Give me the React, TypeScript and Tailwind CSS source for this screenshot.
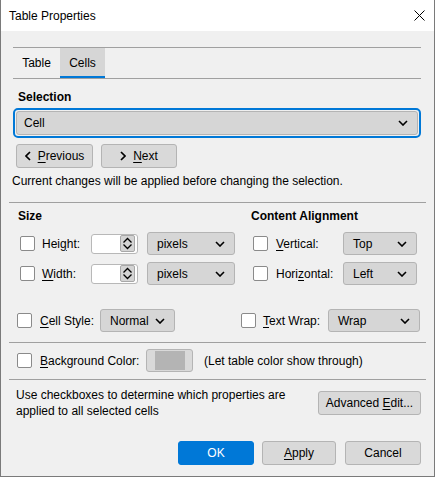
import { ReactNode } from 'react';

function Chevron() {
  return (
    <svg width="10" height="6" viewBox="0 0 10 6" className="shrink-0">
      <path d="M1 1 L5 5 L9 1" fill="none" stroke="#000" strokeWidth="1.6" />
    </svg>
  );
}

function Check({ className = '' }: { className?: string }) {
  return <div className={`w-[15px] h-[15px] shrink-0 bg-white border border-[#8a8a8a] rounded-[2px] ${className}`} />;
}

function Select({ label, w, h = 'h-[23px]' }: { label: string; w: string; h?: string }) {
  return (
    <div className={`${w} ${h} shrink-0 flex items-center justify-between pl-[9px] pr-[9px] bg-[#d6d6d6] border border-[#b4b4b4] rounded-[3px]`}>
      <span>{label}</span>
      <Chevron />
    </div>
  );
}

function Btn({ children, w, primary = false }: { children: ReactNode; w: string; primary?: boolean }) {
  return (
    <div
      className={`${w} h-[24px] shrink-0 flex items-center justify-center rounded-[3px] border ${
        primary ? 'bg-[#0078d7] border-[#0078d7] text-white' : 'bg-[#d9d9d9] border-[#b4b4b4]'
      }`}
    >
      {children}
    </div>
  );
}

function U({ children }: { children: ReactNode }) {
  return <span className="underline underline-offset-2">{children}</span>;
}

function Spin() {
  return (
    <div className="w-[47px] h-[20px] shrink-0 bg-white border border-[#b8b8b8] rounded-[3px] flex items-center justify-end pr-[2px]">
      <div className="w-[15px] h-[17px] bg-[#d4d4d4] border border-[#a8a8a8] rounded-[2px] flex items-center justify-center">
        <svg width="11" height="13" viewBox="0 0 11 13">
          <path d="M1.5 5.5 L5.5 1.5 L9.5 5.5 M1.5 7.5 L5.5 11.5 L9.5 7.5" fill="none" stroke="#000" strokeWidth="1.3" />
        </svg>
      </div>
    </div>
  );
}

function Sep() {
  return <div className="ml-[8px] w-[417px] h-px bg-[#a0a0a0]" />;
}

export default function App() {
  return (
    <div className="w-[436px] h-[477px] bg-white font-['Liberation_Sans',Arial,sans-serif] text-[12px] leading-[16px] text-black">
      <div className="w-[435px] h-[477px] bg-[#f0f0f0] border border-t-0 border-[#7a7a7a] flex flex-col">
        {/* Title bar */}
        <div className="h-[31px] bg-white flex items-center justify-between pl-[8px] pr-[9px] shrink-0">
          <span>Table Properties</span>
          <svg width="11" height="11" viewBox="0 0 11 11">
            <path d="M0.5 0.5 L10.5 10.5 M10.5 0.5 L0.5 10.5" stroke="#000" strokeWidth="1" />
          </svg>
        </div>

        {/* Tabs */}
        <div className="mt-[16px] ml-[12px] w-[408px] border-t border-b border-[#a0a0a0] flex h-[32px]">
          <div className="h-[30px] w-[47px] flex items-center justify-center">Table</div>
          <div className="h-[30px] w-[45px] flex items-center justify-center bg-[#d6d6d6] border-b-2 border-[#0078d7] pt-[2px]">Cells</div>
        </div>

        {/* Selection */}
        <div className="mt-[10px] ml-[17px] font-bold">Selection</div>
        <div className="mt-[3px] ml-[12px] w-[408px] h-[30px] border-2 border-[#0078d7] rounded-[5px] p-px">
          <div className="h-full flex items-center justify-between pl-[7px] pr-[9px] bg-[#d6d6d6] border border-[#b4b4b4] rounded-[3px]">
            <span>Cell</span>
            <Chevron />
          </div>
        </div>
        <div className="mt-[6px] ml-[15px] flex gap-[8px]">
          <Btn w="w-[77px]">
            <svg width="6" height="10" viewBox="0 0 6 10" className="mr-[7px]">
              <path d="M5 1 L1 5 L5 9" fill="none" stroke="#000" strokeWidth="1.7" />
            </svg>
            <U>P</U>revious
          </Btn>
          <Btn w="w-[76px]">
            <svg width="6" height="10" viewBox="0 0 6 10" className="mr-[7px]">
              <path d="M1 1 L5 5 L1 9" fill="none" stroke="#000" strokeWidth="1.7" />
            </svg>
            <U>N</U>ext
          </Btn>
        </div>
        <div className="mt-[5px] ml-[11px]">Current changes will be applied before changing the selection.</div>
        <div className="mt-[13px]">
          <Sep />
        </div>

        {/* Size / Content Alignment */}
        <div className="mt-[5px] flex">
          <div className="ml-[17px] w-[233px] font-bold">Size</div>
          <div className="font-bold">Content Alignment</div>
        </div>
        <div className="mt-[8px] flex items-center h-[23px]">
          <Check className="ml-[19px]" />
          <div className="ml-[7px] w-[49px]">
            Hei<U>g</U>ht:
          </div>
          <Spin />
          <div className="ml-[9px]">
            <Select label="pixels" w="w-[88px]" />
          </div>
          <Check className="ml-[18px]" />
          <div className="ml-[8px] w-[67px]">
            <U>V</U>ertical:
          </div>
          <Select label="Top" w="w-[74px]" />
        </div>
        <div className="mt-[7px] flex items-center h-[23px]">
          <Check className="ml-[19px]" />
          <div className="ml-[7px] w-[49px]">
            <U>W</U>idth:
          </div>
          <Spin />
          <div className="ml-[9px]">
            <Select label="pixels" w="w-[88px]" />
          </div>
          <Check className="ml-[18px]" />
          <div className="ml-[8px] w-[67px]">
            Hori<U>z</U>ontal:
          </div>
          <Select label="Left" w="w-[74px]" />
        </div>

        {/* Cell style / wrap */}
        <div className="mt-[24px] flex items-center h-[23px]">
          <Check className="ml-[16px]" />
          <div className="ml-[8px] w-[60px]">
            <U>C</U>ell Style:
          </div>
          <Select label="Normal" w="w-[75px]" />
          <Check className="ml-[66px]" />
          <div className="ml-[7px] w-[65px]">
            <U>T</U>ext Wrap:
          </div>
          <Select label="Wrap" w="w-[92px]" />
        </div>
        <div className="mt-[10px]">
          <Sep />
        </div>

        {/* Background */}
        <div className="mt-[6px] flex items-center h-[23px]">
          <Check className="ml-[16px]" />
          <div className="ml-[8px] w-[106px]">
            <U>B</U>ackground Color:
          </div>
          <div className="w-[47px] h-[23px] bg-[#d9d9d9] border border-[#b4b4b4] rounded-[3px] flex items-center justify-center">
            <div className="w-[30px] h-[19px] bg-[#b4b4b4]" />
          </div>
          <div className="ml-[11px]">(Let table color show through)</div>
        </div>
        <div className="mt-[7px]">
          <Sep />
        </div>

        {/* Footer */}
        <div className="mt-[7px] flex">
          <div className="ml-[15px] w-[302px]">
            Use checkboxes to determine which properties are
            <br />
            applied to all selected cells
          </div>
          <div className="mt-[4px]">
            <Btn w="w-[103px]">
              Advanced&nbsp;<U>E</U>dit...
            </Btn>
          </div>
        </div>
        <div className="mt-[22px] flex">
          <div className="ml-[177px]">
            <Btn w="w-[76px]" primary>
              OK
            </Btn>
          </div>
          <div className="ml-[8px]">
            <Btn w="w-[74px]">
              <U>A</U>pply
            </Btn>
          </div>
          <div className="ml-[9px]">
            <Btn w="w-[76px]">Cancel</Btn>
          </div>
        </div>
      </div>
    </div>
  );
}
